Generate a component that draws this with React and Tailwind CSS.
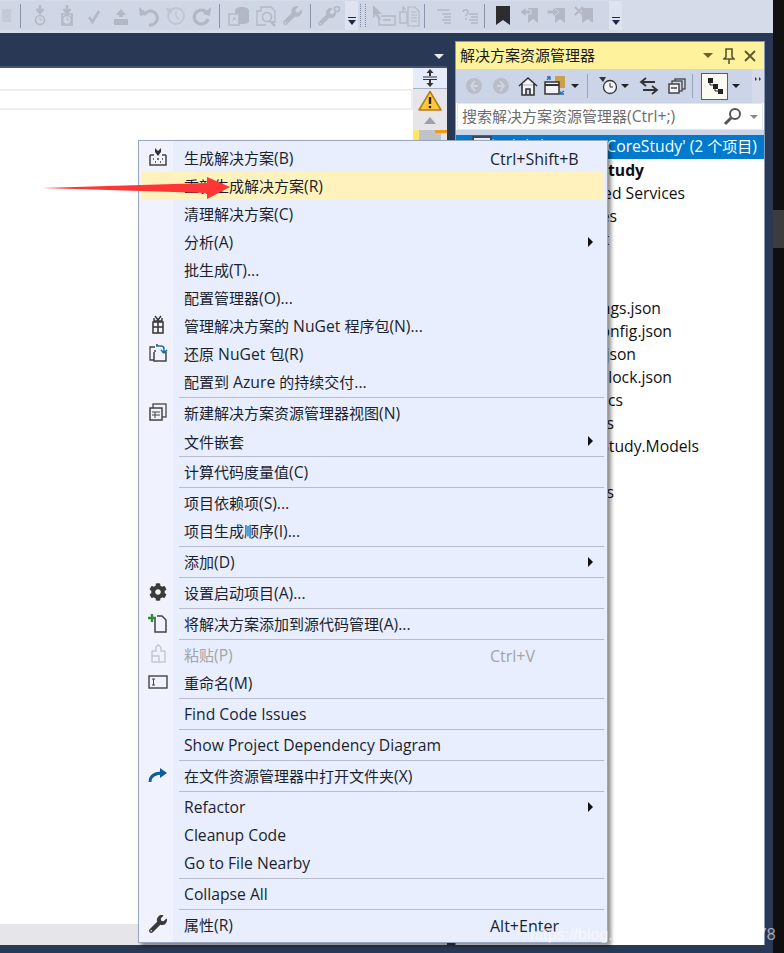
import React from "react";
import { FaCog, FaWrench } from "react-icons/fa";

const G = "#b3b8c4";
const S = ({ children, w = 20, h = 20, vb }) => (
  <svg width={w} height={h} viewBox={vb || `0 0 ${w} ${h}`} fill="none">{children}</svg>
);

// Latin runs are set a little larger so that they take the width they have in the picture.
const T = ({ children }) => (
  <>
    {children.split(/([\x20-\x7e]+)/).map((run, i) =>
      /[\x20-\x7e]/.test(run) ? <span key={i} className="text-[15.7px]">{run}</span> : run
    )}
  </>
);

const IStepDown = ({ box }) => (
  <S w={20} h={24}>
    <path d="M10 1v7M6.5 5L10 9l3.5-4" stroke={G} strokeWidth="2.4" />
    {box ? <rect x="5" y="10" width="10" height="11" stroke={G} strokeWidth="1.6" fill="none" /> : null}
    <circle cx="10" cy="16" r="4.5" stroke={G} strokeWidth="1.6" />
    <path d="M10 13.5V16h2" stroke={G} strokeWidth="1" />
  </S>
);
const ICheck = () => <S><path d="M5 11l3.5 5L15 5" stroke={G} strokeWidth="2.6" /></S>;
const IUp = () => <S><path d="M10 3l5 6h-3v2H8V9H5z" fill={G} /><rect x="3" y="13" width="14" height="6" fill={G} /></S>;
const IUndo = () => (
  <S w={22} h={24}><path d="M7 11a7 7 0 1 1 5 10" stroke={G} strokeWidth="3" /><path d="M2 3l1 9 8-2z" fill={G} /></S>
);
const IHistory = () => (
  <S w={22} h={24}><circle cx="12" cy="12" r="8" stroke="#c0c5d0" strokeWidth="1.8" /><path d="M12 7v5l3 4" stroke="#c0c5d0" strokeWidth="1.4" /><path d="M2 4l8 1-5 6z" fill="#c0c5d0" /></S>
);
const IRedo = () => (
  <S w={22} h={24}><path d="M16 9a7 7 0 1 0 1 6" stroke={G} strokeWidth="3.2" /><path d="M20 3l-1 9-7-2z" fill={G} /></S>
);
const IDb = () => (
  <S w={24} h={24}><ellipse cx="15" cy="6" rx="7" ry="3" fill={G} /><path d="M8 6v14h7c4 0 7-1 7-2V6z" fill={G} /><rect x="2" y="10" width="10" height="11" fill="#cfd6e6" stroke={G} strokeWidth="1.4" /><path d="M5 17l3-3M6 14h2v2" stroke={G} strokeWidth="1" /></S>
);
const IFind = () => (
  <S w={24} h={24}><path d="M7 7V3h10l4 4v11h-4M7 7H3v14h9" stroke={G} strokeWidth="1.3" /><circle cx="13" cy="13" r="4.5" fill="#cfd6e6" stroke={G} strokeWidth="1.6" /><path d="M16 17l5 5" stroke={G} strokeWidth="2.2" /></S>
);
const IWrench = ({ c = G, s = 20 }) => <FaWrench size={s} color={c} />;
const IWrenchDot = () => (
  <S w={24} h={24}><g transform="translate(0 4)"><FaWrench size={18} color={G} /></g><circle cx="19" cy="5" r="2.5" stroke={G} strokeWidth="1.5" /></S>
);
const ICursorBox = () => (
  <S w={24} h={24}><path d="M1 1v13l3-3 3 5 2-1-3-5h4z" fill={G} /><path d="M9 12h14v9H7v-6M11 16h8" stroke={G} strokeWidth="1.4" /></S>
);
const IIndentBox = () => (
  <S w={24} h={24}><rect x="1" y="8" width="7" height="11" stroke={G} strokeWidth="1.3" /><path d="M4 4h2M4 8V3l3 3M9 3h7l4 4v15H9zM12 8h6M12 11h6M12 14h6M12 17h6" stroke={G} strokeWidth="1.2" /></S>
);
const ILines = ({ q }) => (
  <S w={20} h={20}>
    {q ? <path d="M2 6c0-3 5-3 5 0 0 2-2 2-2 4M5 12v2" stroke={G} strokeWidth="1.4" /> : <path d="M3 4h13" stroke={G} strokeWidth="1.5" />}
    <path d="M8 8h9M10 11h7M8 14h9M10 17h7" stroke={G} strokeWidth="1.4" />
  </S>
);
const IBookmark = () => <S w={16} h={22}><path d="M1 1h14v19l-7-5-7 5z" fill="#2d2d30" /></S>;
const IBmArrow = ({ d, x }) => (
  <S w={22} h={22}>
    <path d={x ? "M9 3h11v15l-5-4-6 4z" : "M9 3h10v15l-5-4-5 4z"} fill={G} />
    {d === "l" ? <path d="M1 7l6-5v3h5v4H7v3z" fill={G} stroke="#cfd6e6" strokeWidth="1" /> : null}
    {d === "r" ? <path d="M13 7L7 2v3H1v4h6v3z" fill={G} stroke="#cfd6e6" strokeWidth="1" /> : null}
    {x ? <path d="M2 2l8 8M10 2l-8 8" stroke={G} strokeWidth="2" /> : null}
  </S>
);

const Sep = ({ ml = 4, mr = 5 }) => <div className="w-px h-[24px] bg-[#8995ab]" style={{ marginLeft: ml, marginRight: mr }} />;
const Cell = ({ children }) => <div className="w-[27px] h-[26px] flex items-center justify-center shrink-0">{children}</div>;
const Overflow = () => (
  <div className="w-[13px] h-[29px] bg-[#dfe3ef] flex flex-col items-center justify-end pb-[5px] shrink-0">
    <div className="w-[8px] h-px bg-[#1b2a4a] mb-[2px]" />
    <div className="w-0 h-0 border-x-[4px] border-x-transparent border-t-[5px] border-t-[#1b2a4a]" />
  </div>
);

const TopBar = () => (
  <div className="h-[33px] bg-[#d6dbe9] flex items-start pt-px shrink-0">
    <div className="w-[345px] h-[29px] bg-[#cfd6e6] flex items-center overflow-hidden shrink-0">
      <div className="w-[20px] h-full flex items-center justify-end pr-[9px]">
        <div className="w-[9px] h-[13px] bg-[#c4cad6]" />
      </div>
      <Sep ml={0} />
      <Cell><IStepDown /></Cell><Cell><IStepDown box /></Cell><Cell><ICheck /></Cell><Cell><IUp /></Cell>
      <Cell><IUndo /></Cell><Cell><IHistory /></Cell><Cell><IRedo /></Cell>
      <Sep />
      <Cell><IDb /></Cell><Cell><IFind /></Cell><Cell><IWrench s={19} /></Cell>
      <Sep />
      <Cell><IWrenchDot /></Cell>
    </div>
    <Overflow />
    <div className="w-[251px] h-[29px] bg-[#cfd6e6] flex items-center shrink-0">
      <div className="w-[2px]" />
      <div className="w-[6px] h-[23px] border-x border-dotted border-[#7f8ba3]" />
      <div className="w-[4px]" />
      <Cell><ICursorBox /></Cell><Cell><IIndentBox /></Cell>
      <Sep ml={0} />
      <Cell><ILines /></Cell><Cell><ILines q /></Cell>
      <Sep ml={0} mr={4} />
      <Cell><IBookmark /></Cell><Cell><IBmArrow d="l" /></Cell><Cell><IBmArrow d="r" /></Cell><Cell><IBmArrow x /></Cell>
    </div>
    <Overflow />
  </div>
);

const Doc = () => (
  <div className="w-[455px] pr-[8px] flex flex-col shrink-0">
    <div className="h-[33px] flex items-center justify-end pr-[3px] pt-[13px]">
      <div className="w-0 h-0 border-x-[5px] border-x-transparent border-t-[5px] border-t-[#e6e9f0]" />
    </div>
    <div className="flex-1 border-t-2 border-[#44546f] flex min-h-0">
      <div className="w-[413px] flex flex-col bg-white">
        <div className="h-[21px] shrink-0" />
        <div className="h-[21px] shrink-0 border-y-2 border-r-2 border-[#eeeef2]" />
        <div className="flex-1" />
        <div className="h-[21px] bg-[#e6e6ea] shrink-0" />
      </div>
      <div className="flex-1 bg-[#e6e6ea] flex flex-col items-center">
        <div className="w-full h-[21px] bg-[#e6ecfb] border-b border-[#a9b1c4] flex items-center justify-center shrink-0">
          <S w={16} h={18}><path d="M8 0l3.5 4h-2.5v3h-2V4H4.500zM8 18l3.500-4h-2.500v-3h-2v3H4.500z" fill="#333" /><path d="M1 8h14M1 10.500h14" stroke="#333" strokeWidth="1" /></S>
        </div>
        <div className="mt-[1px]">
          <S w={24} h={22}><path d="M12 1.500L23 20H1z" fill="#ffc83d" stroke="#b8791a" strokeWidth="1.500" strokeLinejoin="round" /><path d="M12 7v7" stroke="#222" strokeWidth="2.400" /><circle cx="12" cy="17" r="1.300" fill="#222" /></S>
        </div>
        <div className="mt-[5px] w-0 h-0 border-x-[6px] border-x-transparent border-b-[7px] border-b-[#9fa2ac]" />
        <div className="mt-[6px] w-full h-[20px] flex shrink-0 relative">
          <div className="w-[6px] bg-[#ffe765]" />
          <div className="w-[22px] bg-[#c2c3c9]" />
          <div className="absolute right-0 top-0 w-[12px] h-[3px] bg-[#f39c12]" />
        </div>
      </div>
    </div>
  </div>
);

const Tree = [
  ["AspNetCoreStudy", 645, true],
  ["Connected Services", 686],
  ["Dependencies", 618],
  ["wwwroot", 610],
  ["Pages", 560],
  ["Models", 560],
  ["appsettings.json", 662],
  ["bundleconfig.json", 673],
  ["libman.json", 637],
  ["package-lock.json", 673],
  ["Program.cs", 624],
  ["Startup.cs", 615],
  ["AspNetCoreStudy.Models", 700],
  ["Models", 560],
  ["Dependencies", 615],
];

const Panel = () => (
  <div className="w-[310px] mt-[8px] border-x border-t border-[#8b99b8] bg-white flex flex-col shrink-0">
    <div className="h-[27px] bg-[#fff29d] flex items-center pl-[4px] pr-[8px] text-[15px] text-[#1a1a1a] shrink-0">
      <span>解决方案资源管理器</span>
      <div className="ml-auto w-0 h-0 border-x-[5px] border-x-transparent border-t-[5px] border-t-[#6b6232]" />
      <div className="ml-[10px]"><S w={12} h={16}><path d="M3 1h6v8l2 2H1l2-2zM6 11v5" stroke="#5a5430" strokeWidth="1.600" /></S></div>
      <div className="ml-[9px]"><S w={12} h={12}><path d="M1 1l10 10M11 1L1 11" stroke="#5a5430" strokeWidth="1.800" /></S></div>
    </div>
    <div className="h-[34px] bg-[#ccd5e8] flex items-center shrink-0 relative">
      <div className="w-[4px]" />
      <Cell><S><circle cx="10" cy="10" r="8" fill="#b9bec9" /><path d="M11 5l-4 5 4 5M7 10h7" stroke="#ccd5e8" strokeWidth="2" /></S></Cell>
      <Cell><S><circle cx="10" cy="10" r="8" fill="#b9bec9" /><path d="M9 5l4 5-4 5M13 10H6" stroke="#ccd5e8" strokeWidth="2" /></S></Cell>
      <Cell><S w={20} h={20}><path d="M1 10l9-8 9 8M4 8v11h12V8M8 19v-6h4v6" stroke="#333" strokeWidth="1.600" fill="#f4f4f4" /></S></Cell>
      <Cell><S w={24} h={22}><rect x="12" y="1" width="10" height="12" fill="#c9a04e" /><rect x="2" y="7" width="14" height="12" fill="#f1f3f8" stroke="#333" strokeWidth="1.500" /><path d="M2 10h14" stroke="#333" strokeWidth="2" /><path d="M4 5l3-3M4 2h3v3M21 16l-4 3M21 19h-4v-3" stroke="#1b6fb5" strokeWidth="1.300" /></S></Cell>
      <div className="ml-[3px] w-0 h-0 border-x-[4px] border-x-transparent border-t-[4px] border-t-[#222]" />
      <div className="w-px h-[24px] bg-[#9aa5bc] ml-[8px] mr-[7px]" />
      <Cell><S w={22} h={22}><path d="M1 2l7 0-3 5z" fill="#333" /><circle cx="12" cy="12" r="6.500" fill="#f1f3f8" stroke="#333" strokeWidth="1.300" /><path d="M12 8v4h3" stroke="#333" strokeWidth="1" /></S></Cell>
      <div className="-ml-[1px] w-0 h-0 border-x-[4px] border-x-transparent border-t-[4px] border-t-[#222]" />
      <div className="w-[6px]" />
      <Cell><S><path d="M7 2L2 6l5 4M2 6h14M13 10l5 4-5 4M18 14H4" stroke="#333" strokeWidth="1.800" /></S></Cell>
      <div className="w-[1px]" />
      <Cell><S w={18} h={18}><rect x="7" y="2" width="10" height="10" stroke="#444" strokeWidth="1.300" /><rect x="4" y="4" width="10" height="10" fill="#ccd5e8" stroke="#444" strokeWidth="1.300" /><rect x="1" y="7" width="10" height="9" fill="#f1f3f8" stroke="#444" strokeWidth="1.500" /><path d="M3 11h6" stroke="#444" strokeWidth="1.500" /></S></Cell>
      <div className="w-px h-[24px] bg-[#9aa5bc] ml-[2px] mr-[8px]" />
      <div className="w-[27px] h-[27px] bg-[#fbfaf3] border border-[#4a5f85] flex items-center justify-center shrink-0">
        <S><path d="M3 2h5v5H3zM8 8h5v5H8zM13 13h5v5h-5z" fill="#222" /><path d="M5 6v3h3M10 12v3h3" stroke="#222" strokeWidth="1" /></S>
      </div>
      <div className="ml-[4px] w-0 h-0 border-x-[4px] border-x-transparent border-t-[4px] border-t-[#222]" />
      <div className="absolute right-0 top-0 bottom-0 w-[12px] bg-[#d6dbe9] flex justify-center pt-[8px] gap-[2px]">
        <span className="w-0 h-0 border-y-[2px] border-y-transparent border-l-[2px] border-l-[#333]" />
        <span className="w-0 h-0 border-y-[2px] border-y-transparent border-l-[2px] border-l-[#333]" />
      </div>
    </div>
    <div className="h-[27px] bg-white mx-px border border-[#e3e6ee] flex items-center pl-[4px] pr-[3px] text-[15px] text-[#6d6d6d] shrink-0">
      <span><T>搜索解决方案资源管理器(Ctrl+;)</T></span>
      <div className="ml-auto"><S w={22} h={20}><circle cx="13" cy="7" r="5" stroke="#555" strokeWidth="2" /><path d="M9 11l-6 6" stroke="#555" strokeWidth="3" /></S></div>
      <div className="ml-[6px] mr-[1px] w-0 h-0 border-x-[4px] border-x-transparent border-t-[4px] border-t-[#888]" />
    </div>
    <div className="h-[5px] bg-[#ccd5e8] shrink-0" />
    <div className="h-[24px] bg-[#007acc] text-white text-[15px] flex items-center justify-end pr-[7px] relative shrink-0">
      <div className="absolute left-[16px] top-[1px] w-[20px] h-[14px] border-2 border-[#3a4a5c] bg-[#e8eefd]" />
      <span className="whitespace-nowrap"><T>解决方案'AspNetCoreStudy' (2 个项目)</T></span>
    </div>
    {Tree.map(([t, end, b], i) => (
      <div key={i} className="h-[23px] flex items-center justify-end text-[15.7px] text-[#111] shrink-0" style={{ paddingRight: 765 - end }}>
        <span className={b ? "font-bold whitespace-nowrap" : "whitespace-nowrap"}>{t}</span>
      </div>
    ))}
  </div>
);

const Arrow = () => <div className="ml-auto mr-[11px] w-0 h-0 border-y-[5px] border-y-transparent border-l-[5px] border-l-[#111]" />;

const MBuild = () => (
  <S w={20} h={20}><path d="M2 8h4M14 8h4M2 8v10h16V8" stroke="#444" strokeWidth="1.500" /><path d="M7 1l3 3 3-3v4l-3 4-3-4z" fill="#333" /><path d="M5 12h1M9 12h2M14 12h1M7 15h1M12 15h1" stroke="#444" strokeWidth="1.600" /></S>
);
const MGift = () => (
  <S w={20} h={20}><path d="M5 7h10v11H5zM10 7v11M5 12h10" stroke="#333" strokeWidth="1.500" /><path d="M7 1l3 4 3-4M6 3v3h8V3" stroke="#333" strokeWidth="1.400" /></S>
);
const MRestore = () => (
  <S w={20} h={20}><path d="M7 4H2v13h4M8 2h2" stroke="#444" strokeWidth="1.300" /><path d="M6 8h2M14 9h4v9H6V9" stroke="#444" strokeWidth="1.500" /><path d="M8 3h5a3 3 0 0 1 3 3v3M13 7l3 3 3-3" stroke="#1b6fb5" strokeWidth="1.500" /></S>
);
const MView = () => (
  <S w={20} h={20}><rect x="5" y="2" width="13" height="13" stroke="#444" strokeWidth="1.300" /><rect x="2" y="6" width="12" height="12" fill="#f0f3fe" stroke="#444" strokeWidth="1.500" /><path d="M4 10h8M4 13h8M7 10v6" stroke="#444" strokeWidth="1" /></S>
);
const MAdd = () => (
  <S w={20} h={20}><path d="M7 6v13h11V7l-4-4H9" stroke="#444" strokeWidth="1.500" /><path d="M4 1v8M0 5h8" stroke="#2e8b3a" strokeWidth="2.400" /></S>
);
const MPaste = () => (
  <S w={20} h={20}><path d="M4 7v11h13V7M4 7h3M14 7h3M4 12h7v6" stroke="#c3c6cf" strokeWidth="1.400" /><path d="M8 8V3l2-2 3 2v5" stroke="#c3c6cf" strokeWidth="1.400" /></S>
);
const MRename = () => (
  <S w={20} h={14}><rect x="1" y="1" width="18" height="12" stroke="#444" strokeWidth="1.400" fill="#f0f3fe" /><path d="M4 4h3M4 10h3M5.500 4v6" stroke="#444" strokeWidth="1" /></S>
);
const MOpen = () => (
  <S w={20} h={16}><path d="M2 15c0-7 5-9 13-9" stroke="#0e5c9c" strokeWidth="2.800" /><path d="M12 1l7 5-7 5z" fill="#0e5c9c" /></S>
);

const menu = [
  { i: <MBuild />, t: "生成解决方案(B)", k: "Ctrl+Shift+B" },
  { t: "重新生成解决方案(R)", hi: true },
  { t: "清理解决方案(C)" },
  { t: "分析(A)", sub: true },
  { t: "批生成(T)..." },
  { t: "配置管理器(O)..." },
  { i: <MGift />, t: "管理解决方案的 NuGet 程序包(N)..." },
  { i: <MRestore />, t: "还原 NuGet 包(R)" },
  { t: "配置到 Azure 的持续交付..." },
  "sep",
  { i: <MView />, t: "新建解决方案资源管理器视图(N)" },
  { t: "文件嵌套", sub: true },
  "sep",
  { t: "计算代码度量值(C)" },
  "sep",
  { t: "项目依赖项(S)..." },
  { t: "项目生成顺序(I)..." },
  "sep",
  { t: "添加(D)", sub: true },
  "sep",
  { i: <FaCog size={18} color="#3a3a3a" />, t: "设置启动项目(A)..." },
  "sep",
  { i: <MAdd />, t: "将解决方案添加到源代码管理(A)..." },
  "sep",
  { i: <MPaste />, t: "粘贴(P)", k: "Ctrl+V", dis: true },
  { i: <MRename />, t: "重命名(M)" },
  "sep",
  { t: "Find Code Issues" },
  "sep",
  { t: "Show Project Dependency Diagram" },
  "sep",
  { i: <MOpen />, t: "在文件资源管理器中打开文件夹(X)" },
  "sep",
  { t: "Refactor", sub: true },
  { t: "Cleanup Code" },
  { t: "Go to File Nearby" },
  "sep",
  { t: "Collapse All" },
  "sep",
  { i: <FaWrench size={18} color="#3a3a3a" />, t: "属性(R)", k: "Alt+Enter" },
];

const Menu = () => (
  <div className="absolute left-[138px] top-[140px] w-[470px] h-[803px] border border-[#9aa6bd] bg-[#e8eefd] shadow-[3px_3px_4px_rgba(0,0,0,0.45)] py-[3px] pl-[3px] pr-[3px] text-[15px] text-[#1a1f2e]">
    <div className="absolute left-0 top-0 bottom-0 w-[34px] bg-[#f0f3fe]" />
    <div className="relative flex flex-col w-[462px]">
      {menu.map((m, idx) =>
        m === "sep" ? (
          <div key={idx} className="h-[3px] flex items-center pl-[37px] shrink-0">
            <div className="w-full h-px bg-[#b8bccb]" />
          </div>
        ) : (
          <div key={idx} className={"h-[28px] flex items-center shrink-0 " + (m.hi ? "bg-[#fff2bd]" : "")}>
            <div className="w-[32px] flex items-center justify-center shrink-0 -translate-y-[1px]">{m.i}</div>
            <div className="w-[10px] shrink-0" />
            <span className={"w-[306px] whitespace-nowrap shrink-0 translate-y-[1px] " + (m.dis ? "text-[#a2a4a5]" : "")}><T>{m.t}</T></span>
            {m.k ? <span className={"whitespace-nowrap text-[16px] translate-y-[1px] " + (m.dis ? "text-[#a2a4a5]" : "")}>{m.k}</span> : null}
            {m.sub ? <Arrow /> : null}
          </div>
        )
      )}
    </div>
  </div>
);

export default function App() {
  return (
    <div className="relative w-[784px] h-[953px] overflow-hidden flex bg-[#111] font-['Open_Sans','Noto_Sans_CJK_SC',sans-serif]">
      <div className="w-[773px] h-full bg-[#293955] flex flex-col shrink-0">
        <TopBar />
        <div className="flex-1 flex min-h-0 pb-[8px]">
          <Doc />
          <Panel />
        </div>
      </div>
      <div className="w-[11px] h-full flex flex-col shrink-0">
        <div className="h-[210px] bg-[#111]" />
        <div className="h-[38px] bg-[#3c3c3c]" />
        <div className="flex-1 bg-[#0f0f0f]" />
      </div>
      <Menu />
      <svg className="absolute left-[40px] top-[174px]" width="192" height="30" viewBox="0 0 192 30">
        <path d="M2 14L167 9V3L190 13L167 25V19Z" fill="#ff3636" />
      </svg>
      <div className="absolute left-[530px] top-[923px] text-[16px] font-['Liberation_Sans',sans-serif] text-white/60 whitespace-nowrap">https://blog.csdn.net/qq_41841878</div>
    </div>
  );
}
